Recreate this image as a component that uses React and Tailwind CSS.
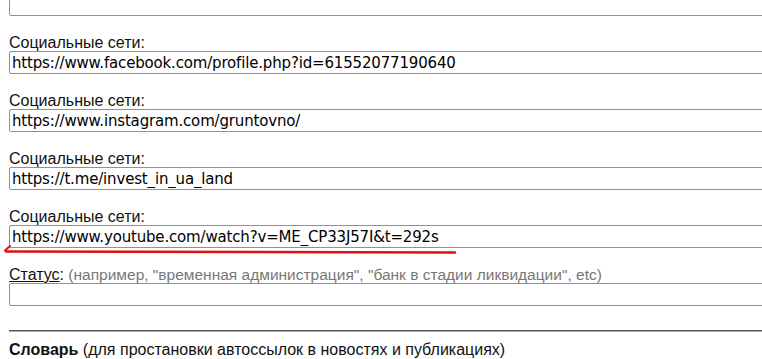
import React from 'react';

const links = [
    'https://www.facebook.com/profile.php?id=61552077190640',
    'https://www.instagram.com/gruntovno/',
    'https://t.me/invest_in_ua_land',
    'https://www.youtube.com/watch?v=ME_CP33J57I&t=292s',
];

const inputCls = "block w-[800px] h-[23px] border border-[#8f8f9d] rounded-[2px] bg-white px-[2px] text-[15px] text-black outline-none font-['DejaVu_Sans',sans-serif] tracking-[-0.17px]";

const Field = ({ label, value, children }) => (
    <div className="mb-[18px]">
        <div className="h-[17px] leading-[17px] text-[16px] text-[#111] whitespace-nowrap">{label}{children}</div>
        <input type="text" defaultValue={value} className={inputCls} readOnly />
    </div>
);

export default function App() {
    return (
        <div className="relative w-[762px] h-[359px] overflow-hidden bg-white font-['Liberation_Sans',Arial,sans-serif]">
            <div className="pl-[9px] -mt-[7px]">
                <div className="mb-[18px]">
                    <input type="text" className={inputCls} readOnly />
                </div>
                {links.map((l, i) => (
                    <Field key={i} label="Социальные сети:" value={l} />
                ))}
                <Field label={<span className="underline">Статус</span>} value="">
                    :<span className="text-[15.5px] text-[#777]"> (например, "временная администрация", "банк в стадии ликвидации", etc)</span>
                </Field>
                <div className="mt-[24px] w-[800px] border-t-[1px] border-t-[#555] border-b-[1px] border-b-[#aaa]"></div>
                <div className="mt-[9px] leading-[17px] text-[16px] text-[#111] whitespace-nowrap">
                    <b>Словарь</b> (для простановки автоссылок в новостях и публикациях)
                </div>
            </div>
            {/* red underline annotation */}
            <svg className="absolute left-0 top-[240px]" width="470" height="20" viewBox="0 0 470 20">
                <path d="M5 10.5 L10 6" stroke="#e01010" strokeWidth="2" fill="none" strokeLinecap="round" />
                <path d="M6 11.5 Q200 11 455 12.5" stroke="#e01010" strokeWidth="2.5" fill="none" strokeLinecap="round" />
            </svg>
        </div>
    );
}
